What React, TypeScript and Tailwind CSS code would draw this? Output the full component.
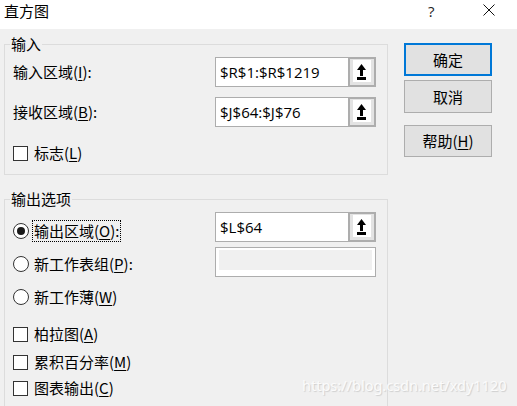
import React from "react";

const cjk = "font-['Noto_Sans_CJK_SC','Noto_Sans',sans-serif]";

function Radio({ checked }: { checked?: boolean }) {
  return (
    <div className="w-[16px] h-[16px] shrink-0 rounded-full border border-[#333333] bg-white flex items-center justify-center">
      {checked && <div className="w-[8px] h-[8px] rounded-full bg-[#1a1a1a]" />}
    </div>
  );
}

function Check() {
  return <div className="w-[15px] h-[15px] shrink-0 border border-[#333333] bg-white" />;
}

function UploadBtn() {
  return (
    <div className="w-[28px] h-[30px] -my-[1px] -mr-[1px] shrink-0 border-2 border-[#adadad] bg-[#e3e3e3] pt-[1px] pb-[3px] px-[3px] flex">
      <div className="flex-1 bg-white flex items-center justify-center">
        <svg width="18" height="20" viewBox="0 0 18 20">
          <polygon points="4,9 13,9 8.5,3" fill="#000" />
          <rect x="7" y="8.5" width="3" height="6.5" fill="#000" />
          <rect x="4" y="16" width="9" height="3" fill="#000" />
        </svg>
      </div>
    </div>
  );
}

function RefBox({ value }: { value: string }) {
  return (
    <div className="w-[161px] h-[30px] flex items-stretch border border-[#adadad] bg-white">
      <div className="flex-1 flex items-center pl-[4px] text-[15px] text-black font-['Open_Sans',sans-serif]">
        {value}
      </div>
      <UploadBtn />
    </div>
  );
}

function U({ children }: { children: React.ReactNode }) {
  return <span className="underline underline-offset-[2px] decoration-[1px]">{children}</span>;
}

export default function App() {
  return (
    <div className={`w-[517px] h-[406px] overflow-hidden bg-[#f0f0f0] relative text-black ${cjk} text-[15px]`}>
      {/* title bar */}
      <div className="h-[29px] bg-white flex items-start">
        <span className="ml-[4px] mt-[1px] leading-[20px] text-[15px]">直方图</span>
        <div className="ml-auto w-[89px] flex items-start">
          <span className="mt-[1px] leading-[20px] text-[15px] font-['Open_Sans',sans-serif] text-[#222]">?</span>
          <svg className="ml-auto mr-[22px] mt-[4px]" width="12" height="12" viewBox="0 0 12 12">
            <line x1="0.5" y1="0.5" x2="11.5" y2="11.5" stroke="#111" strokeWidth="1" />
            <line x1="11.5" y1="0.5" x2="0.5" y2="11.5" stroke="#111" strokeWidth="1" />
          </svg>
        </div>
      </div>

      <div className="flex items-start pl-[4px]">
        <div className="w-[384px] flex flex-col">
          {/* 输入 */}
          <fieldset className="mt-[5px] h-[141px] border border-[#dcdcdc] pl-[8px] pr-[11px]">
            <legend className="ml-[-3px] px-[1px] leading-[20px] text-[15px]">输入</legend>
            <div className="mt-[3px] flex items-center h-[30px]">
              <div className="w-[202px] leading-[20px]">
                输入区域(<U>I</U>):
              </div>
              <RefBox value="$R$1:$R$1219" />
            </div>
            <div className="mt-[10px] flex items-center h-[30px]">
              <div className="w-[202px] leading-[20px]">
                接收区域(<U>B</U>):
              </div>
              <RefBox value="$J$64:$J$76" />
            </div>
            <div className="mt-[15px] flex items-center h-[22px]">
              <Check />
              <span className="ml-[6px] leading-[20px]">
                标志(<U>L</U>)
              </span>
            </div>
          </fieldset>

          {/* 输出选项 */}
          <fieldset className="mt-[14px] h-[260px] border border-[#dcdcdc] pl-[8px] pr-[11px]">
            <legend className="ml-[-3px] px-[1px] leading-[20px] text-[15px]">输出选项</legend>
            <div className="mt-[3px] flex items-end h-[30px]">
              <div className="w-[202px] h-[22px] flex items-center">
                <Radio checked />
                <span className="ml-[3px] h-[22px] flex items-center border border-dotted border-black px-[1px] leading-[20px]">
                  输出区域(<U>O</U>):
                </span>
              </div>
              <RefBox value="$L$64" />
            </div>
            <div className="mt-[5px] flex items-center h-[30px]">
              <div className="w-[202px] h-[22px] mt-[4px] flex items-center">
                <Radio />
                <span className="ml-[5px] leading-[20px]">
                  新工作表组(<U>P</U>):
                </span>
              </div>
              <div className="w-[161px] h-[30px] border border-[#adadad] bg-white pt-[2px] px-[3px] pb-[6px] flex">
                <div className="flex-1 bg-[#f0f0f0]" />
              </div>
            </div>
            <div className="mt-[9px] h-[22px] flex items-center">
              <Radio />
              <span className="ml-[5px] leading-[20px]">
                新工作薄(<U>W</U>)
              </span>
            </div>
            <div className="mt-[15px] h-[22px] flex items-center">
              <Check />
              <span className="ml-[6px] leading-[20px]">
                柏拉图(<U>A</U>)
              </span>
            </div>
            <div className="mt-[6px] h-[22px] flex items-center">
              <Check />
              <span className="ml-[6px] leading-[20px]">
                累积百分率(<U>M</U>)
              </span>
            </div>
            <div className="mt-[4px] h-[22px] flex items-center">
              <Check />
              <span className="ml-[6px] leading-[20px]">
                图表输出(<U>C</U>)
              </span>
            </div>
          </fieldset>
        </div>

        {/* buttons */}
        <div className="ml-[16px] mt-[14px] w-[88px] flex flex-col">
          <div className="h-[33px] border-2 border-[#0078d7] bg-[#e1e1e1] flex items-center justify-center leading-[20px]">
            确定
          </div>
          <div className="mt-[4px] h-[33px] border border-[#adadad] bg-[#e1e1e1] flex items-center justify-center leading-[20px]">
            取消
          </div>
          <div className="mt-[12px] h-[32px] border border-[#adadad] bg-[#e1e1e1] flex items-center justify-center leading-[20px]">
            帮助(<U>H</U>)
          </div>
        </div>
      </div>

      {/* watermark */}
      <div className="absolute left-[302px] top-[375px] leading-[20px] text-[14.5px] font-['Noto_Sans',sans-serif] text-[#fbfbfb] [text-shadow:1px_1px_1px_rgba(0,0,0,0.14)] whitespace-nowrap">
        https://blog.csdn.net/xdy1120
      </div>
    </div>
  );
}
